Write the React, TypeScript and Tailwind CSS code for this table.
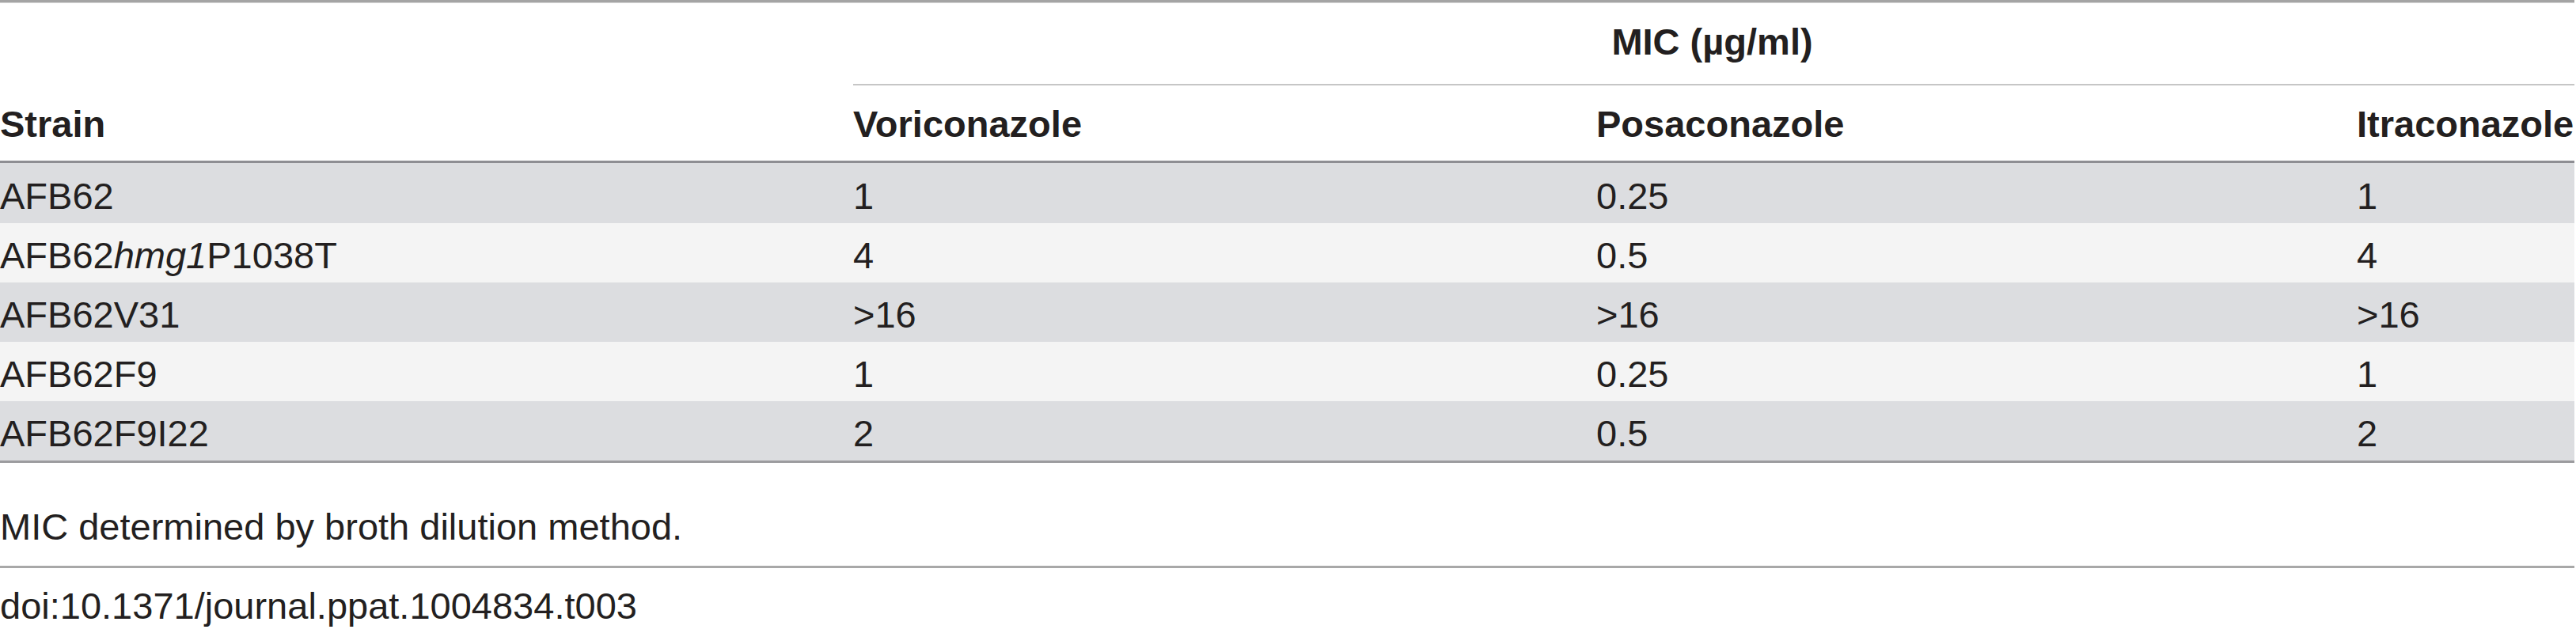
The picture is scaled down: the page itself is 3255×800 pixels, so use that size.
import { FC, ReactNode } from "react";

type Row = {
  strain: ReactNode;
  vori: string;
  posa: string;
  itra: string;
  tall?: boolean;
};

const rows: Row[] = [
  { strain: "AFB62", vori: "1", posa: "0.25", itra: "1", tall: true },
  {
    strain: (
      <>
        AFB62<i>hmg1</i>P1038T
      </>
    ),
    vori: "4",
    posa: "0.5",
    itra: "4",
  },
  { strain: "AFB62V31", vori: ">16", posa: ">16", itra: ">16" },
  { strain: "AFB62F9", vori: "1", posa: "0.25", itra: "1" },
  { strain: "AFB62F9I22", vori: "2", posa: "0.5", itra: "2" },
];

// column template shared by header and body rows
const cols = "grid grid-cols-[1078px_939px_961px_1fr]";

const Cell: FC<{ children: ReactNode }> = ({ children }) => (
  <div className="whitespace-nowrap">{children}</div>
);

export default function App() {
  return (
    <div
      className="w-[3253px] bg-white text-[47px] leading-[47px] text-[#231f20]"
      style={{ fontFamily: '"Liberation Sans", Arial, sans-serif' }}
    >
      {/* top rule */}
      <div className="h-[3px] bg-[#a4a4a4]" />
      <div className="h-px bg-[#d6d6d6]" />

      {/* spanning header */}
      <div className={`${cols} h-[102px] font-bold`}>
        <div />
        <div className="col-span-3 pt-[25px] pr-[4px] text-center">
          MIC (µg/ml)
        </div>
      </div>
      <div className={cols}>
        <div />
        <div className="col-span-3 h-[2px] bg-[#c6c6c6]" />
      </div>

      {/* column header */}
      <div className={`${cols} h-[95px] pt-[25px] font-bold`}>
        <Cell>Strain</Cell>
        <Cell>Voriconazole</Cell>
        <Cell>Posaconazole</Cell>
        <Cell>Itraconazole</Cell>
      </div>
      <div className="h-[3px] bg-[#8e8e93]" />

      {/* body */}
      {rows.map((r, i) => (
        <div
          key={i}
          className={`${cols} ${r.tall ? "h-[76px] pt-[18px]" : "h-[75px] pt-[17px]"} ${
            i % 2 === 0 ? "bg-[#dcdde0]" : "bg-[#f4f4f4]"
          }`}
        >
          <Cell>{r.strain}</Cell>
          <Cell>{r.vori}</Cell>
          <Cell>{r.posa}</Cell>
          <Cell>{r.itra}</Cell>
        </div>
      ))}
      <div className="h-[3px] bg-[#9c9c9f]" />

      {/* footnote */}
      <div className="h-[130px] pt-[57px]">MIC determined by broth dilution method.</div>
      <div className="h-[3px] bg-[#a8a8a8]" />
      <div className="h-[82px] pt-[24px]">doi:10.1371/journal.ppat.1004834.t003</div>
    </div>
  );
}
